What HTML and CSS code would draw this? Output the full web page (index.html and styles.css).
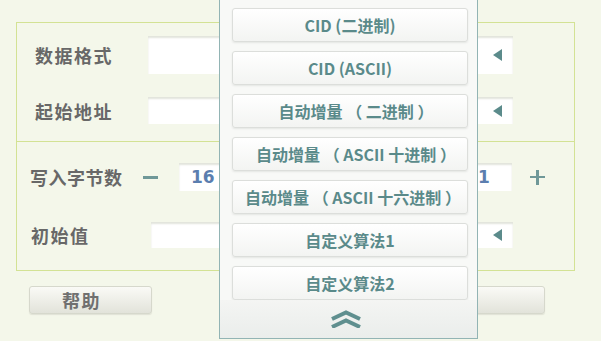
FILE: index.html
```html
<!DOCTYPE html>
<html lang="zh-CN">
<head>
	<meta charset="UTF-8">
	<title>写入设置</title>
	<link rel="stylesheet" href="styles.css">
</head>
<body>
	<!-- 表单面板 -->
	<div class="form">
		<div class="sec sec1">
			<div class="row row1">
				<span class="lbl">数据格式</span>
				<div class="sel sel_tall"><i class="arr"></i></div>
			</div>
			<div class="row row2">
				<span class="lbl">起始地址</span>
				<div class="sel"><i class="arr"></i></div>
			</div>
		</div>
		<div class="sec sec2">
			<div class="row row3">
				<span class="lbl">写入字节数</span>
				<span class="minus"></span>
				<div class="num">16</div>
				<div class="num num_r">1</div>
				<span class="plus"></span>
			</div>
			<div class="row row4">
				<span class="lbl">初始值</span>
				<div class="sel"><i class="arr"></i></div>
			</div>
		</div>
	</div>
	<!-- 底部按钮 -->
	<div class="actions">
		<button class="btn">帮助</button>
		<button class="btn btn_r"></button>
	</div>
	<!-- 下拉选项 -->
	<div class="drop">
		<div class="list">
			<div class="opt">CID (二进制)</div>
			<div class="opt">CID (ASCII)</div>
			<div class="opt opt_inc">自动增量 （ 二进制 ）</div>
			<div class="opt opt_inc">自动增量 （ ASCII 十进制 ）</div>
			<div class="opt opt_wide">自动增量 （ ASCII 十六进制 ）</div>
			<div class="opt">自定义算法1</div>
			<div class="opt">自定义算法2</div>
		</div>
		<div class="bar">
			<svg width="32" height="18" viewBox="0 0 32 18">
				<polyline points="2,9 16,2.5 30,9" fill="none" stroke="#5f8f8f" stroke-width="4"/>
				<polyline points="2,17 16,10.5 30,17" fill="none" stroke="#5f8f8f" stroke-width="4"/>
			</svg>
		</div>
	</div>
</body>
</html>
```
FILE: styles.css
```css
body{
	margin:0;
	background:#f4f7ea;
	font-family:"Noto Sans CJK SC", sans-serif;
	font-weight:bold;
	width:601px;
	height:341px;
	overflow:hidden;
	position:relative;
}
.form{
	margin:22px 0 0 16px;
	width:557px;
	border:1px solid #d3e294;
}
.sec1{
	height:118px;
	padding-top:13px;
	box-sizing:border-box;
}
.sec2{
	height:129px;
	padding-top:21px;
	box-sizing:border-box;
	border-top:1px solid #d3e294;
}
.row{
	display:flex;
	align-items:center;
}
.lbl{
	box-sizing:border-box;
	font-size:18px;
	letter-spacing:1.5px;
	color:#686868;
	white-space:nowrap;
}
.row1 .lbl,.row2 .lbl{
	width:131px;
	padding-left:18px;
}
.row2{
	margin-top:23px;
}
.row3 .lbl{
	width:126px;
	padding-left:13px;
	letter-spacing:0.5px;
}
.row4{
	margin-top:31px;
}
.row4 .lbl{
	width:134px;
	padding-left:14px;
}
.sel{
	position:relative;
	width:365px;
	height:27px;
	background:#fff;
	box-shadow:inset 0 2px 2px #e2e4dc;
}
.sel_tall{
	height:38px;
}
.row4 .sel{
	width:362px;
	height:26px;
}
.arr{
	position:absolute;
	right:11px;
	top:50%;
	margin-top:-6px;
	width:0;
	height:0;
	border-top:6px solid transparent;
	border-bottom:6px solid transparent;
	border-right:9px solid #5b8b8b;
}
.minus{
	width:15px;
	height:3px;
	background:#6f9898;
}
.num{
	box-sizing:border-box;
	margin-left:21px;
	width:70px;
	height:28px;
	padding-left:12px;
	line-height:28px;
	background:#fff;
	box-shadow:inset 0 2px 2px #e2e4dc;
	font-family:"DejaVu Sans", sans-serif;
	font-size:17px;
	color:#5b7eaf;
}
.num_r{
	margin-left:auto;
	width:46px;
	padding-left:12px;
}
.plus{
	position:relative;
	width:15px;
	height:15px;
	margin:0 29px 0 18px;
}
.plus::before,.plus::after{
	content:"";
	position:absolute;
	background:#6f9898;
}
.plus::before{
	left:0;
	top:6px;
	width:15px;
	height:2.5px;
}
.plus::after{
	left:6.25px;
	top:0;
	width:2.5px;
	height:15px;
}
.actions{
	display:flex;
	margin-top:15px;
	padding:0 56px 0 29px;
}
.btn{
	width:123px;
	height:28px;
	border:1px solid #d6d8cc;
	border-radius:3px;
	background:linear-gradient(#fafaf6,#e2e3da);
	box-shadow:0 1px 1px #e0e2d6;
	font-family:inherit;
	font-weight:bold;
	font-size:18px;
	letter-spacing:1.5px;
	color:#707070;
	padding:0 18px 0 0;
}
.btn_r{
	margin-left:auto;
}
.drop{
	position:absolute;
	left:219px;
	top:-1px;
	width:257px;
	height:338px;
	border:1px solid #92b4b4;
	background:#f8f9f7;
	display:flex;
	flex-direction:column;
}
.list{
	flex:1;
	overflow:hidden;
	padding:8px 9px 0 12px;
}
.opt{
	box-sizing:border-box;
	height:34px;
	margin-bottom:9px;
	border:1px solid #dcdedb;
	border-radius:3px;
	background:linear-gradient(#ffffff,#f3f4f2);
	box-shadow:0 1px 2px #e4e6e3;
	text-align:center;
	line-height:32px;
	font-size:16px;
	color:#5a8a8a;
	white-space:pre;
}
.opt_inc{
	padding-left:12px;
}
.opt_wide{
	padding-left:6px;
}
.bar{
	height:38px;
	display:flex;
	align-items:center;
	justify-content:center;
	padding-right:5px;
	background:linear-gradient(#f4f5f3,#eaedeb);
}
```
